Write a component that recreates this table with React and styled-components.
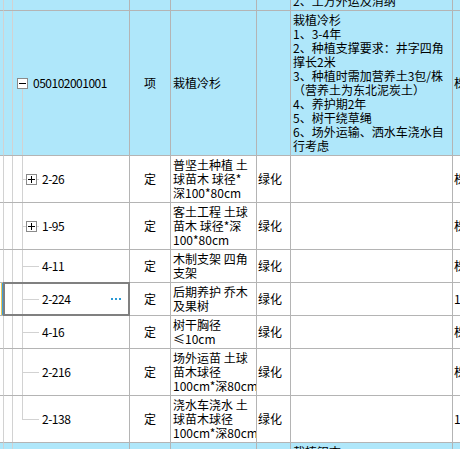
import React from 'react'
import styled, { createGlobalStyle } from 'styled-components'

const BLUE = '#afe7fa'
const LINE = '#b4b4b4'
const GUIDE = '#d2d2d2'

const GlobalStyle = createGlobalStyle`
  html, body {
    margin: 0;
    padding: 0;
    background: #fff;
  }
  body {
    font-family: "Noto Sans CJK SC", "Noto Sans", sans-serif;
    font-size: 12px;
    color: #000;
  }
`

const Viewport = styled.div`
  width: 460px;
  height: 449px;
  overflow: hidden;
  background: #fff;
`

// scrolled table body, first visible row is cut off at the top
const Body = styled.div`
  width: 513px;
  margin-top: -8px;
`

const Row = styled.div`
  display: grid;
  grid-template-columns: 4px 126px 41px 86px 34px 162px 60px;
  background: ${p => (p.$blue ? BLUE : '#fff')};
`

const RowHead = styled.div`
  border-right: 1px solid ${GUIDE};
  border-bottom: 1px solid ${LINE};
  display: flex;
`

const Marker = styled.span`
  width: 2px;
  margin: 0 0 0 1px;
  background: linear-gradient(to right, #e8c85a 50%, #3a9fd8 50%);
`

const CodeCell = styled.div`
  position: relative;
  display: flex;
  align-items: stretch;
  border-right: 1px solid ${LINE};
  border-bottom: 1px solid ${LINE};
  line-height: 14px;
  white-space: nowrap;
`

const Indent = styled.span`
  flex: none;
  width: 8px;
  border-right: 1px solid ${GUIDE};
`

const Branch = styled.span`
  position: relative;
  flex: none;
  width: ${p => (p.$level === 0 ? 20 : 29)}px;
  display: flex;
  align-items: center;
  &::before {
    content: '';
    position: absolute;
    left: 9px;
    width: 1px;
    background: ${GUIDE};
    top: ${p => (p.$kind === 'parent' ? '50%' : '0')};
    bottom: ${p => (p.$kind === 'last' ? 'calc(50% - 1px)' : '0')};
    display: ${p => (p.$kind === 'collapsed' ? 'none' : 'block')};
  }
  &::after {
    content: '';
    position: absolute;
    left: 9px;
    top: 50%;
    width: 17px;
    height: 1px;
    background: ${GUIDE};
    display: ${p => (p.$level === 1 ? 'block' : 'none')};
  }
`

const Toggle = styled.span`
  position: relative;
  z-index: 1;
  box-sizing: border-box;
  flex: none;
  width: 11px;
  height: 11px;
  margin-left: ${p => p.$offset}px;
  border: 1px solid #8a8a8a;
  background: #fff;
  &::before {
    content: '';
    position: absolute;
    left: 1px;
    top: 4px;
    width: 7px;
    height: 1px;
    background: #000;
  }
  &::after {
    content: '';
    position: absolute;
    left: 4px;
    top: 1px;
    width: 1px;
    height: 7px;
    background: #000;
    display: ${p => (p.$open ? 'none' : 'block')};
  }
`

const Code = styled.span`
  align-self: center;
  letter-spacing: -0.5px;
`

const Dots = styled.span`
  align-self: center;
  display: flex;
  gap: 2px;
  margin: 0 8px 0 auto;
  & > i {
    width: 2px;
    height: 2px;
    background: #2a9ad6;
  }
`

const Selection = styled.span`
  position: absolute;
  left: -1px;
  top: -1px;
  right: -1px;
  bottom: -1px;
  border: 2px solid #808080;
  pointer-events: none;
`

const Cell = styled.div`
  display: flex;
  flex-direction: column;
  justify-content: center;
  align-items: ${p => (p.$center ? 'center' : 'flex-start')};
  padding: 2px ${p => p.$pad}px;
  border-right: 1px solid ${LINE};
  border-bottom: 1px solid ${LINE};
  line-height: 14px;
  white-space: nowrap;
  overflow: hidden;
  min-width: 0;
`

const Line = styled.div`
  height: 14px;
`

const rows = [
  {
    blue: true,
    tree: 'collapsed',
    feature: ['2、土方外运及消纳'],
  },
  {
    blue: true,
    tree: 'parent',
    code: '050102001001',
    type: '项',
    name: ['栽植冷杉'],
    feature: [
      '栽植冷杉',
      '1、3-4年',
      '2、种植支撑要求：井字四角',
      '撑长2米',
      '3、种植时需加营养土3包/株',
      '（营养土为东北泥炭土）',
      '4、养护期2年',
      '5、树干绕草绳',
      '6、场外运输、洒水车浇水自',
      '行考虑',
    ],
    unit: '株',
  },
  { tree: 'plus', code: '2-26', type: '定', name: ['普坚土种植 土', '球苗木 球径*', '深100*80cm'], spec: '绿化', unit: '株' },
  { tree: 'plus', code: '1-95', type: '定', name: ['客土工程 土球', '苗木 球径*深', '100*80cm'], spec: '绿化', unit: '株' },
  { tree: 'child', code: '4-11', type: '定', name: ['木制支架 四角', '支架'], spec: '绿化', unit: '株' },
  { tree: 'child', code: '2-224', type: '定', name: ['后期养护 乔木', '及果树'], spec: '绿化', unit: '1', selected: true },
  { tree: 'child', code: '4-16', type: '定', name: ['树干胸径', '≤10cm'], spec: '绿化', unit: '株' },
  { tree: 'child', code: '2-216', type: '定', name: ['场外运苗 土球', '苗木球径', '100cm*深80cm'], spec: '绿化', unit: '株' },
  { tree: 'last', code: '2-138', type: '定', name: ['浇水车浇水 土', '球苗木球径', '100cm*深80cm'], spec: '绿化', unit: '1' },
  {
    blue: true,
    tree: 'parent',
    feature: ['栽植银杏', '1、胸径15-16cm', '2、种植支撑要求：井字四角'],
  },
]

function TreeCode({ tree, code, selected }) {
  const level = tree === 'parent' || tree === 'collapsed' ? 0 : 1
  return (
    <CodeCell>
      <Indent />
      <Branch $kind={tree} $level={level}>
        {level === 0 && tree === 'parent' && <Toggle $offset={4} $open />}
        {tree === 'plus' && <Toggle $offset={13} />}
      </Branch>
      {code && <Code>{code}</Code>}
      {selected && (
        <Dots>
          <i />
          <i />
          <i />
        </Dots>
      )}
      {selected && <Selection />}
    </CodeCell>
  )
}

function Lines({ items }) {
  return (items || []).map((t, i) => <Line key={i}>{t}</Line>)
}

export default function App() {
  return (
    <>
      <GlobalStyle />
      <Viewport>
        <Body>
          {rows.map((r, i) => (
            <Row key={i} $blue={r.blue}>
              <RowHead>{r.selected && <Marker />}</RowHead>
              <TreeCode tree={r.tree} code={r.code} selected={r.selected} />
              <Cell $center $pad={1}>{r.type}</Cell>
              <Cell $pad={2}>
                <Lines items={r.name} />
              </Cell>
              <Cell $pad={1}>{r.spec}</Cell>
              <Cell $pad={2}>
                <Lines items={r.feature} />
              </Cell>
              <Cell $pad={1}>{r.unit}</Cell>
            </Row>
          ))}
        </Body>
      </Viewport>
    </>
  )
}
